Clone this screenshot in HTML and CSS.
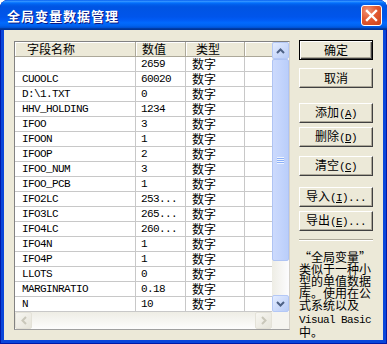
FILE: index.html
```html
<!DOCTYPE html>
<html lang="zh-CN">
<head>
  <meta charset="UTF-8">
  <title>全局变量数据管理</title>
  <link rel="stylesheet" href="styles.css">
</head>
<body>

  <div class="window">
    <div class="titlebar">
      <span class="title">全局变量数据管理</span>
      <button class="close" aria-label="关闭">
        <svg width="13" height="13" viewBox="0 0 13 13"><path d="M2 2 L11 11 M11 2 L2 11" stroke="#fff" stroke-width="2.4" stroke-linecap="square"/></svg>
      </button>
    </div>

    <div class="client">
      <div class="list">
        <div class="grid-area">
          <table class="grid">
            <thead>
              <tr>
                <th class="c1">字段名称</th>
                <th class="c2">数值</th>
                <th class="c3">类型</th>
                <th class="c4"></th>
              </tr>
            </thead>
            <tbody id="rows"></tbody>
          </table>
        </div>

        <div class="vscroll">
          <div class="sb-btn">
            <svg width="9" height="6" viewBox="0 0 9 6"><path d="M1 5 L4.5 1.5 L8 5" fill="none" stroke="#4D6185" stroke-width="2"/></svg>
          </div>
          <div class="thumb"><span class="grip"></span></div>
          <div class="track"></div>
          <div class="sb-btn">
            <svg width="9" height="6" viewBox="0 0 9 6"><path d="M1 1 L4.5 4.5 L8 1" fill="none" stroke="#4D6185" stroke-width="2"/></svg>
          </div>
        </div>

        <div class="hscroll">
          <div class="sb-btn off">
            <svg width="6" height="9" viewBox="0 0 6 9"><path d="M5 1 L1.5 4.5 L5 8" fill="none" stroke="#C9C7BA" stroke-width="2"/></svg>
          </div>
          <div class="track"></div>
          <div class="sb-btn off">
            <svg width="6" height="9" viewBox="0 0 6 9"><path d="M1 1 L4.5 4.5 L1 8" fill="none" stroke="#C9C7BA" stroke-width="2"/></svg>
          </div>
        </div>
        <div class="corner"></div>
      </div>

      <div class="side">
        <button class="btn default">确定</button>
        <button class="btn gap-8">取消</button>
        <button class="btn gap-15">添加<span class="en">(<u>A</u>)</span></button>
        <button class="btn gap-4">删除<span class="en">(<u>D</u>)</span></button>
        <button class="btn gap-9">清空<span class="en">(<u>C</u>)</span></button>
        <button class="btn gap-11">导入<span class="en">(<u>I</u>)...</span></button>
        <button class="btn gap-4">导出<span class="en">(<u>E</u>)...</span></button>
        <div class="sep"></div>
        <p class="note">“全局变量”<br>类似于一种小<br>型的单值数据<br>库。使用在公<br>式系统以及<br><span class="en vb">Visual Basic</span><br>中。</p>
      </div>
    </div>
  </div>

  <script>
    const data = [
      ['', '2659'], ['CUOOLC', '60020'], ['D:\\1.TXT', '0'], ['HHV_HOLDING', '1234'],
      ['IFOO', '3'], ['IFOON', '1'], ['IFOOP', '2'], ['IFOO_NUM', '3'],
      ['IFOO_PCB', '1'], ['IFO2LC', '253...'], ['IFO3LC', '265...'], ['IFO4LC', '260...'],
      ['IFO4N', '1'], ['IFO4P', '1'], ['LLOTS', '0'], ['MARGINRATIO', '0.18'], ['N', '10']
    ];

    const tbody = document.getElementById('rows');
    data.forEach(function (row) {
      const tr = document.createElement('tr');
      tr.innerHTML =
        '<td class="en"></td><td class="en"></td><td>数字</td><td></td>';
      tr.children[0].textContent = row[0];
      tr.children[1].textContent = row[1];
      tbody.appendChild(tr);
    });
  </script>
</body>
</html>
```

FILE: styles.css
```css
* {
  box-sizing: border-box;
}

body {
  margin: 0;
  background: #fff;
}

.window {
  width: 387px;
  height: 344px;
  display: flex;
  flex-direction: column;
  background: #0A46DA;
  border-radius: 8px 8px 0 0;
  box-shadow: inset 1px 0 #0019A8, inset -1px 0 #0019A8, inset 0 -1px #0019A8;
  overflow: hidden;
  font-family: "Noto Sans CJK SC", sans-serif;
  font-size: 12px;
  color: #000;
}

.en {
  font-family: "Liberation Mono", monospace;
  font-size: 11px;
  letter-spacing: -0.6px;
}

/* title bar */

.titlebar {
  flex: none;
  height: 30px;
  display: flex;
  align-items: center;
  justify-content: space-between;
  padding: 0 5px 0 7px;
  background: linear-gradient(to bottom, #0058EE 0%, #3593FF 4%, #288EFF 6%, #127DFF 8%, #036FFC 10%, #0262EE 14%, #0057E5 20%, #0054E3 24%, #0055EB 56%, #005BF5 66%, #026AFE 76%, #0062EF 86%, #0052D6 92%, #0040AB 94%, #003092 100%);
}

.title {
  color: #fff;
  font-weight: bold;
  font-size: 13px;
  letter-spacing: 1px;
  line-height: 14px;
  padding-top: 1px;
  text-shadow: 1px 1px #0A1883;
}

.close {
  width: 21px;
  height: 21px;
  padding: 0;
  display: flex;
  align-items: center;
  justify-content: center;
  border: 1px solid #fff;
  border-radius: 3px;
  background: radial-gradient(circle at 30% 25%, #F09478 0%, #E35A32 45%, #C9411A 100%);
}

/* client area */

.client {
  flex: 1;
  margin: 0 4px 4px;
  background: #ECE9D8;
  display: flex;
  align-items: flex-start;
  padding: 11px 0 0 10px;
}

.list {
  display: grid;
  grid-template-columns: 257px 17px;
  grid-template-rows: 270px 17px;
  border: 1px solid;
  border-color: #828282 #D4D0C8 #A0A0A0 #828282;
  background: #fff;
}

.grid-area {
  background: #fff;
}

.grid {
  border-collapse: separate;
  border-spacing: 0;
  table-layout: fixed;
  width: 257px;
}

.grid th,
.grid td {
  height: 15px;
  line-height: 14px;
  padding: 0 0 0 6px;
  border-right: 1px solid #C8C8C8;
  border-bottom: 1px solid #C8C8C8;
  white-space: nowrap;
  text-align: left;
  font-weight: normal;
}

.grid th {
  background: #ECE9D8;
  border-right-color: #ACA899;
  border-bottom-color: #ACA899;
  box-shadow: inset 1px 1px #fff;
}

.grid .c1 { width: 121px; padding-left: 12px; }
.grid .c2 { width: 50px; }
.grid .c3 { width: 59px; padding-left: 10px; }
.grid .c4 { width: 27px; border-right: none; }

.grid td:last-child {
  border-right: none;
}

.grid td.en {
  padding-left: 7px;
}

.grid td.en + td.en {
  padding-left: 5px;
}

/* scroll bars */

.vscroll,
.hscroll {
  display: flex;
  background: linear-gradient(to right, #EEEDE5, #FCFCFE);
}

.vscroll {
  flex-direction: column;
}

.hscroll {
  background: linear-gradient(to bottom, #EEEDE5, #FDFDFD);
}

.track {
  flex: 1;
}

.sb-btn {
  flex: none;
  width: 17px;
  height: 17px;
  display: flex;
  align-items: center;
  justify-content: center;
  border: 1px solid #B4C8F6;
  border-radius: 2px;
  background: linear-gradient(135deg, #E3ECFF, #B9CCF7);
}

.sb-btn.off {
  border-color: #E4E2D8;
  background: linear-gradient(135deg, #F7F6F1, #E6E4DA);
}

.thumb {
  flex: none;
  height: 202px;
  display: flex;
  align-items: center;
  justify-content: center;
  border: 1px solid #AFC4F4;
  border-radius: 2px;
  background: linear-gradient(to right, #CCDAFD, #BACEFA);
}

.grip {
  width: 7px;
  height: 7px;
  background: repeating-linear-gradient(to bottom, #EEF4FE 0 1px, #8CB0F8 1px 2px);
}

.corner {
  background: #F5F4EF;
}

/* buttons */

.side {
  width: 74px;
  margin: -1px 0 0 9px;
  display: flex;
  flex-direction: column;
}

.btn {
  height: 20px;
  padding: 0;
  font-family: "Noto Sans CJK SC", sans-serif;
  font-size: 12px;
  line-height: 14px;
  color: #000;
  background: #ECE9D8;
  border: 1px solid;
  border-color: #fff #404040 #404040 #fff;
  box-shadow: inset -1px -1px #ACA899;
}

.btn .en {
  font-size: 11px;
}

.btn.default {
  border: 1px solid #000;
  box-shadow: inset 1px 1px #fff, inset -1px -1px #404040, inset -2px -2px #ACA899;
}

.gap-4 { margin-top: 4px; }
.gap-8 { margin-top: 8px; }
.gap-9 { margin-top: 9px; }
.gap-11 { margin-top: 11px; }
.gap-15 { margin-top: 15px; }

.sep {
  margin-top: 8px;
  border-top: 1px solid #ACA899;
  border-bottom: 1px solid #fff;
}

.note {
  margin: 10px 0 0;
  font-size: 12px;
  line-height: 12px;
  white-space: nowrap;
}

.note .vb {
  display: inline-block;
  margin-top: 3px;
  font-size: 11px;
}
```
